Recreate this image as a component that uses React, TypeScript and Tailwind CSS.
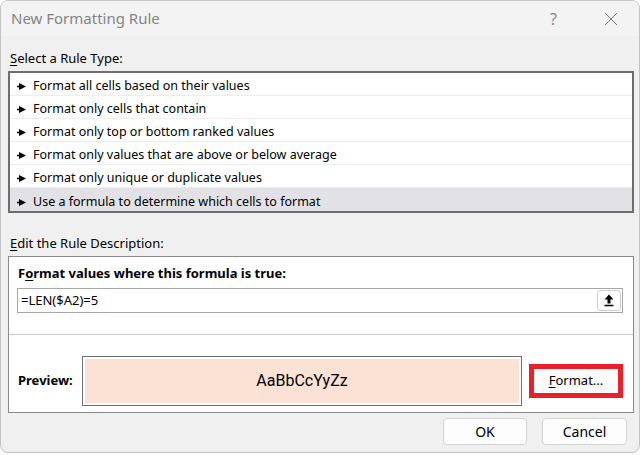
const ruleTypes = [
  "Format all cells based on their values",
  "Format only cells that contain",
  "Format only top or bottom ranked values",
  "Format only values that are above or below average",
  "Format only unique or duplicate values",
  "Use a formula to determine which cells to format",
];

const Pointer = () => (
  <svg width="9" height="7" viewBox="0 0 9 7" className="shrink-0">
    <path d="M0 3.5h3" stroke="#000" strokeWidth="1.4" />
    <path d="M2 0L9 3.5L2 7Z" fill="#000" />
  </svg>
);

export default function App() {
  return (
    <div className="w-[642px] h-[455px] bg-white overflow-hidden font-['Noto_Sans',sans-serif] text-[13px] text-black">
      <div className="w-[640px] h-[453px] rounded-[8px] border border-[#c4c4c4] bg-[#f0f0f0] flex flex-col overflow-hidden">
        {/* Title bar */}
        <div className="h-[35px] bg-[#f3f3f3] flex items-center pl-[10px] shrink-0">
          <span className="text-[15px] text-[#858585]">New Formatting Rule</span>
          <span className="ml-auto text-[16px] text-[#8a8a8a] mr-[47px]">?</span>
          <svg width="14" height="14" viewBox="0 0 14 14" className="mr-[21px]">
            <path d="M1 1L13 13M13 1L1 13" stroke="#7a7a7a" strokeWidth="1" />
          </svg>
        </div>

        <div className="pl-[7px] flex flex-col">
          {/* Rule type */}
          <div className="mt-[13px] h-[18px] leading-[18px] pl-[2px]">
            <span className="underline underline-offset-2">S</span>elect a Rule Type:
          </div>
          <div className="mt-[4px] w-[626px] h-[142px] border-2 border-[#6e6e6e] bg-white flex flex-col">
            {ruleTypes.map((t, i) => (
              <div
                key={t}
                className={
                  i === ruleTypes.length - 1
                    ? "h-[23px] flex items-center gap-[7px] pl-[7px] pt-[5px] bg-[#e2e2e6] text-[12.5px]"
                    : "h-[23px] flex items-center gap-[7px] pl-[7px] pt-[5px] border-b border-[#ededed] text-[12.5px]"
                }
              >
                <Pointer />
                <span>{t}</span>
              </div>
            ))}
          </div>

          {/* Description */}
          <div className="mt-[21px] h-[18px] leading-[18px] pl-[2px]">
            <span className="underline underline-offset-2">E</span>dit the Rule Description:
          </div>
          <div className="mt-[4px] w-[626px] h-[157px] border border-[#8a8a8a] bg-white flex flex-col">
            <div className="mt-[7px] h-[18px] leading-[18px] pl-[9px] font-bold">
              F<span className="underline underline-offset-2">o</span>rmat values where this formula is true:
            </div>
            <div className="mt-[6px] ml-[8px] mr-[10px] h-[25px] border border-[#a8a8a8] flex items-center pl-[3px] pr-[1px]">
              <span>=LEN($A2)=5</span>
              <div className="ml-auto w-[24px] h-[21px] rounded-[3px] border border-[#cfcfcf] bg-white flex items-center justify-center">
                <svg width="10" height="13" viewBox="0 0 10 13">
                  <path d="M5 0.5L9.5 5.5H6.5V9.5H3.5V5.5H0.5Z" fill="#000" />
                  <path d="M0.5 11.5H9.5" stroke="#000" strokeWidth="1.6" />
                </svg>
              </div>
            </div>
            <div className="mt-[21px] h-px bg-[#c8c8c8]" />
            <div className="mt-[21px] flex items-center">
              <span className="w-[73px] pl-[9px] font-bold">Preview:</span>
              <div className="w-[440px] h-[50px] border border-[#707070] p-[2px] bg-white">
                <div className="w-full h-full bg-[#fbe2d5] flex items-center justify-center font-['Roboto',sans-serif] text-[16px]">
                  AaBbCcYyZz
                </div>
              </div>
              <div className="ml-[7px] w-[94px] h-[34px] border-[5px] border-[#e8202a] bg-[#fbfbfb] flex items-center justify-center">
                <span>
                  <span className="underline underline-offset-2">F</span>ormat...
                </span>
              </div>
            </div>
          </div>

          {/* Buttons */}
          <div className="mt-[5px] flex justify-end gap-[15px] pr-[12px]">
            <button className="w-[84px] h-[27px] rounded-[4px] border border-[#d3d3d3] bg-[#fdfdfd] text-[14px]">
              OK
            </button>
            <button className="w-[85px] h-[27px] rounded-[4px] border border-[#d3d3d3] bg-[#fdfdfd] text-[14px]">
              Cancel
            </button>
          </div>
        </div>
      </div>
    </div>
  );
}
